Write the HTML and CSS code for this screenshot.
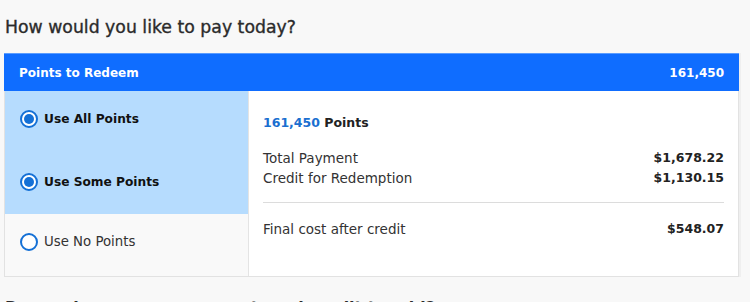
FILE: index.html
```html
<!DOCTYPE html>
<html>
<head>
<meta charset="utf-8">
<link rel="stylesheet" href="styles.css">
</head>
<body>
<h2 class="title">How would you like to pay today?</h2>
<div class="card">
  <div class="card-head">
    <span>Points to Redeem</span>
    <span>161,450</span>
  </div>
  <div class="card-body">
    <div class="options">
      <div class="option selected">
        <span class="radio checked"></span>
        <span class="opt-label bold">Use All Points</span>
      </div>
      <div class="option selected">
        <span class="radio checked"></span>
        <span class="opt-label bold">Use Some Points</span>
      </div>
      <div class="option">
        <span class="radio"></span>
        <span class="opt-label">Use No Points</span>
      </div>
    </div>
    <div class="summary">
      <div class="points"><span class="pts-num">161,450</span> Points</div>
      <div class="row"><span>Total Payment</span><span class="val">$1,678.22</span></div>
      <div class="row"><span>Credit for Redemption</span><span class="val">$1,130.15</span></div>
      <div class="divider"></div>
      <div class="row final"><span>Final cost after credit</span><span class="val">$548.07</span></div>
    </div>
  </div>
</div>
<h2 class="next">Do you have a coupon or a travel credit to add?</h2>
</body>
</html>
```
FILE: styles.css
```css
html, body {
  margin: 0;
  padding: 0;
  background: #f8f8f8;
  font-family: "DejaVu Sans", "Open Sans", sans-serif;
  color: #222;
}
body {
  width: 750px;
  height: 302px;
  overflow: hidden;
}
.title {
  margin: 0;
  padding: 17px 0 0 5px;
  height: 36px;
  font-size: 17.3px;
  font-weight: 400;
  -webkit-text-stroke: 0.35px #2b2b2b;
  color: #2b2b2b;
  line-height: 20px;
  box-sizing: content-box;
}
.card {
  margin-left: 4px;
  width: 735px;
  box-sizing: border-box;
  border: 1px solid #e2e2e2;
  background: #fff;
  box-shadow: 2px 0 0 #efefef;
}
.card-head {
  height: 37px;
  background: #0f6dff;
  border-top: 1px solid #5a9cff;
  margin: -1px -1px 0 -1px;
  display: flex;
  justify-content: space-between;
  align-items: center;
  padding: 0 15px;
  color: #fff;
  font-weight: 700;
  font-size: 12px;
}
.card-body {
  display: grid;
  grid-template-columns: 244px 1fr;
}
.options {
  border-right: 1px solid #e4e4e4;
  background: #f9f9f9;
}
.option {
  height: 62px;
  box-sizing: border-box;
  padding: 0 0 6px 15px;
  display: flex;
  align-items: center;
  gap: 6px;
  font-size: 13.3px;
}
.option:nth-child(2) { height: 61px; padding-bottom: 3px; }
.option:nth-child(3) { height: 61px; }
.option.selected { background: #b6dcfe; }
.radio {
  width: 18px;
  height: 18px;
  box-sizing: border-box;
  border: 2px solid #1470d6;
  border-radius: 50%;
  background: #fff;
  position: relative;
  flex: none;
}
.radio.checked::after {
  content: "";
  position: absolute;
  left: 2px;
  top: 2px;
  width: 10px;
  height: 10px;
  border-radius: 50%;
  background: #1470d6;
}
.opt-label { color: #333; }
.opt-label.bold { font-weight: 700; color: #111; font-size: 12.2px; }
.summary {
  padding: 24px 14px 0 14px;
  font-size: 13.5px;
}
.points {
  font-weight: 700;
  font-size: 12.5px;
  color: #222;
  height: 16px;
  line-height: 16px;
  margin-bottom: 17px;
}
.pts-num { color: #1a6fd0; }
.row {
  display: flex;
  justify-content: space-between;
  height: 20px;
  line-height: 20px;
  color: #333;
}
.val { font-weight: 700; color: #222; font-size: 12.5px; }
.divider {
  height: 1px;
  background: #dcdcdc;
  margin: 14px 0 16px 0;
}
.final { margin-bottom: 37px; }
.next {
  margin: 0;
  padding: 21px 0 0 5px;
  font-size: 16px;
  font-weight: 700;
  color: #2b2b2b;
  line-height: 20px;
}
```
